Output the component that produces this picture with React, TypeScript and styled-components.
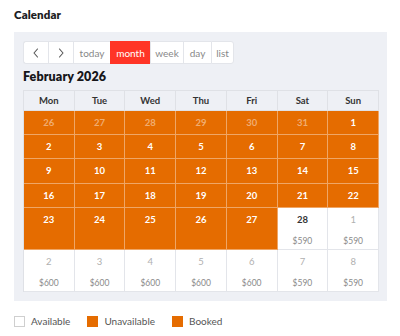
import React from "react";
import styled, { createGlobalStyle } from "styled-components";

const GlobalStyle = createGlobalStyle`
	body {
		margin: 0;
		background: #ffffff;
		font-family: "Lato", "Open Sans", sans-serif;
	}
`;

const ORANGE = "#e56c00";

type Day = { n: number; other?: boolean; booked?: boolean; price?: string; today?: boolean };

const weeks: Day[][] = [
	[
		{ n: 26, other: true, booked: true },
		{ n: 27, other: true, booked: true },
		{ n: 28, other: true, booked: true },
		{ n: 29, other: true, booked: true },
		{ n: 30, other: true, booked: true },
		{ n: 31, other: true, booked: true },
		{ n: 1, booked: true },
	],
	[2, 3, 4, 5, 6, 7, 8].map((n) => ({ n, booked: true })),
	[9, 10, 11, 12, 13, 14, 15].map((n) => ({ n, booked: true })),
	[16, 17, 18, 19, 20, 21, 22].map((n) => ({ n, booked: true })),
	[
		{ n: 23, booked: true },
		{ n: 24, booked: true },
		{ n: 25, booked: true },
		{ n: 26, booked: true },
		{ n: 27, booked: true },
		{ n: 28, today: true, price: "$590" },
		{ n: 1, other: true, price: "$590" },
	],
	[
		{ n: 2, other: true, price: "$600" },
		{ n: 3, other: true, price: "$600" },
		{ n: 4, other: true, price: "$600" },
		{ n: 5, other: true, price: "$600" },
		{ n: 6, other: true, price: "$600" },
		{ n: 7, other: true, price: "$590" },
		{ n: 8, other: true, price: "$590" },
	],
];

const rowHeights = [24, 24, 25, 24, 42, 42];
const dayNames = ["Mon", "Tue", "Wed", "Thu", "Fri", "Sat", "Sun"];
const views = [
	{ label: "today", w: 37 },
	{ label: "month", w: 40, active: true },
	{ label: "week", w: 33 },
	{ label: "day", w: 28 },
	{ label: "list", w: 23 },
];

const Chevron = ({ dir }: { dir: "left" | "right" }) => (
	<svg width="8" height="10" viewBox="0 0 8 10" fill="none">
		<path
			d={dir === "left" ? "M5.5 1 L2 5 L5.5 9" : "M2.5 1 L6 5 L2.5 9"}
			stroke="#555"
			strokeWidth="1.1"
			strokeLinecap="round"
			strokeLinejoin="round"
		/>
	</svg>
);

const App = () => {
	return (
		<Page>
			<GlobalStyle />
			<Heading>Calendar</Heading>
			<Panel>
				<Toolbar>
					<NavButton>
						<Chevron dir="left" />
					</NavButton>
					<NavButton>
						<Chevron dir="right" />
					</NavButton>
					{views.map((v) => (
						<ViewButton key={v.label} $active={v.active} $w={v.w}>
							{v.label}
						</ViewButton>
					))}
				</Toolbar>
				<MonthTitle>February 2026</MonthTitle>
				<Grid>
					{dayNames.map((d) => (
						<HeadCell key={d}>{d}</HeadCell>
					))}
					{weeks.map((week, wi) =>
						week.map((day, di) => (
							<DayCell key={wi + "-" + di} $booked={day.booked} $h={rowHeights[wi]}>
								<DayNum $booked={day.booked} $other={day.other} $tall={rowHeights[wi] > 30}>
									{day.n}
								</DayNum>
								{day.price && <Price>{day.price}</Price>}
							</DayCell>
						))
					)}
				</Grid>
			</Panel>
			<Legend>
				<LegendItem>
					<Swatch />
					Available
				</LegendItem>
				<LegendItem>
					<Swatch $fill={ORANGE} />
					Unavailable
				</LegendItem>
				<LegendItem>
					<Swatch $fill={ORANGE} />
					Booked
				</LegendItem>
			</Legend>
		</Page>
	);
};

export default App;

const Page = styled.div`
	width: 400px;
	height: 336px;
	padding: 8px 13px 0 14px;
	box-sizing: border-box;
	overflow: hidden;
`;

const Heading = styled.div`
	font-size: 11.5px;
	font-weight: 800;
	color: #1d1d1f;
	line-height: 14px;
	height: 24px;
	letter-spacing: 0.1px;
`;

const Panel = styled.div`
	background: #eef0f5;
	padding: 9px 8px 9px 9px;
	width: 373px;
	box-sizing: border-box;
`;

const Toolbar = styled.div`
	display: flex;
	height: 23px;
`;

const NavButton = styled.div`
	width: 25px;
	height: 23px;
	box-sizing: border-box;
	background: #ffffff;
	border: 1px solid #e3e5ea;
	border-right: none;
	display: flex;
	align-items: center;
	justify-content: center;

	&:first-child {
		border-radius: 3px 0 0 3px;
	}
`;

const ViewButton = styled.div<{ $active?: boolean; $w: number }>`
	width: ${(p) => p.$w}px;
	height: 23px;
	box-sizing: border-box;
	background: ${(p) => (p.$active ? "#ff3526" : "#ffffff")};
	color: ${(p) => (p.$active ? "#ffffff" : "#888")};
	border: 1px solid ${(p) => (p.$active ? "#ff3526" : "#e3e5ea")};
	border-right: none;
	font-size: 10px;
	display: flex;
	align-items: center;
	justify-content: center;

	&:last-child {
		border-right: 1px solid #e3e5ea;
		border-radius: 0 3px 3px 0;
	}
`;

const MonthTitle = styled.div`
	font-size: 12.5px;
	font-weight: 800;
	color: #16161a;
	height: 26px;
	line-height: 26px;
	letter-spacing: 0.1px;
`;

const Grid = styled.div`
	display: grid;
	grid-template-columns: repeat(7, 1fr);
	border-top: 1px solid #dfe1e6;
	border-left: 1px solid #dfe1e6;
	width: 356px;
	box-sizing: border-box;
`;

const HeadCell = styled.div`
	height: 20px;
	box-sizing: border-box;
	border-right: 1px solid #dfe1e6;
	border-bottom: 1px solid #dfe1e6;
	background: #eef0f5;
	color: #333;
	font-size: 9.5px;
	font-weight: 700;
	display: flex;
	align-items: center;
	justify-content: center;
`;

const DayCell = styled.div<{ $booked?: boolean; $h: number }>`
	height: ${(p) => p.$h}px;
	box-sizing: border-box;
	background: ${(p) => (p.$booked ? ORANGE : "#ffffff")};
	border-right: 1px solid ${(p) => (p.$booked ? "rgba(255,255,255,0.4)" : "#e3e5ea")};
	border-bottom: 1px solid ${(p) => (p.$booked ? "rgba(255,255,255,0.4)" : "#e3e5ea")};
	display: flex;
	flex-direction: column;
	align-items: center;
`;

const DayNum = styled.div<{ $booked?: boolean; $other?: boolean; $tall?: boolean }>`
	margin-top: ${(p) => (p.$tall ? 6 : 6)}px;
	font-size: 9.5px;
	line-height: 12px;
	font-weight: ${(p) => (p.$other && !p.$booked ? 400 : 700)};
	color: ${(p) =>
		p.$booked ? (p.$other ? "rgba(255,255,255,0.45)" : "#ffffff") : p.$other ? "#b0b0b0" : "#333"};
`;

const Price = styled.div`
	margin-top: 10px;
	font-size: 8.5px;
	line-height: 10px;
	color: #8a8a8a;
`;

const Legend = styled.div`
	display: flex;
	gap: 17px;
	margin-top: 14px;
	align-items: center;
`;

const LegendItem = styled.div`
	display: flex;
	align-items: center;
	gap: 6px;
	font-size: 10px;
	color: #555;
`;

const Swatch = styled.div<{ $fill?: string }>`
	width: 11px;
	height: 11px;
	box-sizing: border-box;
	background: ${(p) => p.$fill || "#ffffff"};
	border: 1px solid ${(p) => (p.$fill ? p.$fill : "#cfcfcf")};
`;
